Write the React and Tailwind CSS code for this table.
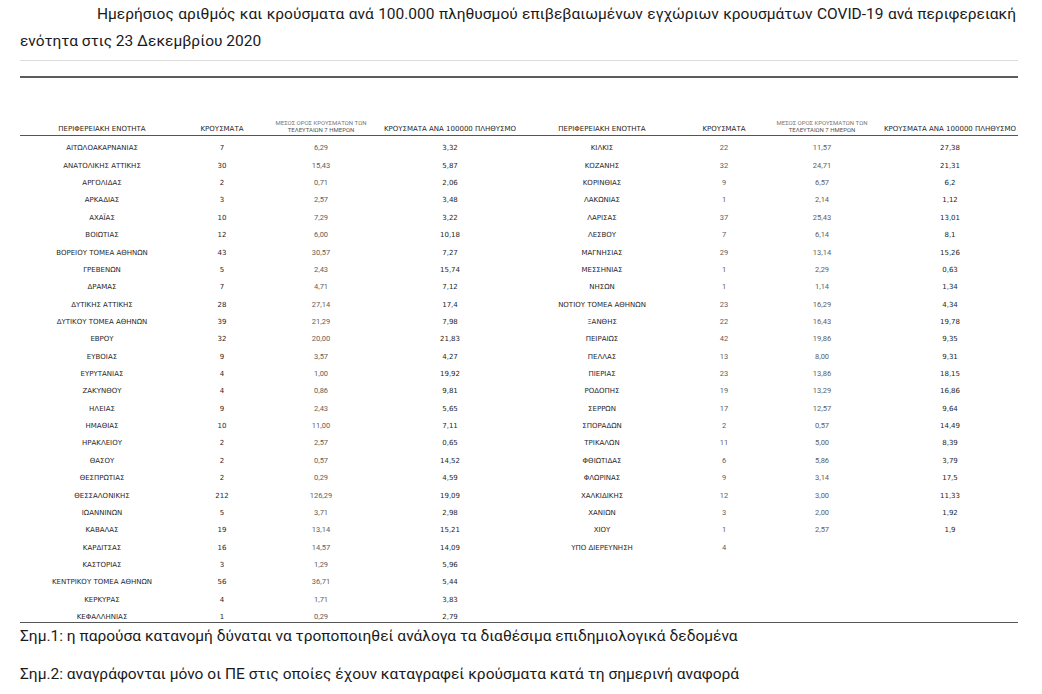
import React from "react";

const left = [
  ["ΑΙΤΩΛΟΑΚΑΡΝΑΝΙΑΣ", "7", "6,29", "3,32"],
  ["ΑΝΑΤΟΛΙΚΗΣ ΑΤΤΙΚΗΣ", "30", "15,43", "5,87"],
  ["ΑΡΓΟΛΙΔΑΣ", "2", "0,71", "2,06"],
  ["ΑΡΚΑΔΙΑΣ", "3", "2,57", "3,48"],
  ["ΑΧΑΪΑΣ", "10", "7,29", "3,22"],
  ["ΒΟΙΩΤΙΑΣ", "12", "6,00", "10,18"],
  ["ΒΟΡΕΙΟΥ ΤΟΜΕΑ ΑΘΗΝΩΝ", "43", "30,57", "7,27"],
  ["ΓΡΕΒΕΝΩΝ", "5", "2,43", "15,74"],
  ["ΔΡΑΜΑΣ", "7", "4,71", "7,12"],
  ["ΔΥΤΙΚΗΣ ΑΤΤΙΚΗΣ", "28", "27,14", "17,4"],
  ["ΔΥΤΙΚΟΥ ΤΟΜΕΑ ΑΘΗΝΩΝ", "39", "21,29", "7,98"],
  ["ΕΒΡΟΥ", "32", "20,00", "21,83"],
  ["ΕΥΒΟΙΑΣ", "9", "3,57", "4,27"],
  ["ΕΥΡΥΤΑΝΙΑΣ", "4", "1,00", "19,92"],
  ["ΖΑΚΥΝΘΟΥ", "4", "0,86", "9,81"],
  ["ΗΛΕΙΑΣ", "9", "2,43", "5,65"],
  ["ΗΜΑΘΙΑΣ", "10", "11,00", "7,11"],
  ["ΗΡΑΚΛΕΙΟΥ", "2", "2,57", "0,65"],
  ["ΘΑΣΟΥ", "2", "0,57", "14,52"],
  ["ΘΕΣΠΡΩΤΙΑΣ", "2", "0,29", "4,59"],
  ["ΘΕΣΣΑΛΟΝΙΚΗΣ", "212", "126,29", "19,09"],
  ["ΙΩΑΝΝΙΝΩΝ", "5", "3,71", "2,98"],
  ["ΚΑΒΑΛΑΣ", "19", "13,14", "15,21"],
  ["ΚΑΡΔΙΤΣΑΣ", "16", "14,57", "14,09"],
  ["ΚΑΣΤΟΡΙΑΣ", "3", "1,29", "5,96"],
  ["ΚΕΝΤΡΙΚΟΥ ΤΟΜΕΑ ΑΘΗΝΩΝ", "56", "36,71", "5,44"],
  ["ΚΕΡΚΥΡΑΣ", "4", "1,71", "3,83"],
  ["ΚΕΦΑΛΛΗΝΙΑΣ", "1", "0,29", "2,79"],
];

const right = [
  ["ΚΙΛΚΙΣ", "22", "11,57", "27,38"],
  ["ΚΟΖΑΝΗΣ", "32", "24,71", "21,31"],
  ["ΚΟΡΙΝΘΙΑΣ", "9", "6,57", "6,2"],
  ["ΛΑΚΩΝΙΑΣ", "1", "2,14", "1,12"],
  ["ΛΑΡΙΣΑΣ", "37", "25,43", "13,01"],
  ["ΛΕΣΒΟΥ", "7", "6,14", "8,1"],
  ["ΜΑΓΝΗΣΙΑΣ", "29", "13,14", "15,26"],
  ["ΜΕΣΣΗΝΙΑΣ", "1", "2,29", "0,63"],
  ["ΝΗΣΩΝ", "1", "1,14", "1,34"],
  ["ΝΟΤΙΟΥ ΤΟΜΕΑ ΑΘΗΝΩΝ", "23", "16,29", "4,34"],
  ["ΞΑΝΘΗΣ", "22", "16,43", "19,78"],
  ["ΠΕΙΡΑΙΩΣ", "42", "19,86", "9,35"],
  ["ΠΕΛΛΑΣ", "13", "8,00", "9,31"],
  ["ΠΙΕΡΙΑΣ", "23", "13,86", "18,15"],
  ["ΡΟΔΟΠΗΣ", "19", "13,29", "16,86"],
  ["ΣΕΡΡΩΝ", "17", "12,57", "9,64"],
  ["ΣΠΟΡΑΔΩΝ", "2", "0,57", "14,49"],
  ["ΤΡΙΚΑΛΩΝ", "11", "5,00", "8,39"],
  ["ΦΘΙΩΤΙΔΑΣ", "6", "5,86", "3,79"],
  ["ΦΛΩΡΙΝΑΣ", "9", "3,14", "17,5"],
  ["ΧΑΛΚΙΔΙΚΗΣ", "12", "3,00", "11,33"],
  ["ΧΑΝΙΩΝ", "3", "2,00", "1,92"],
  ["ΧΙΟΥ", "1", "2,57", "1,9"],
  ["ΥΠΟ ΔΙΕΡΕΥΝΗΣΗ", "4", "", ""],
];

const verd = "font-['DejaVu_Sans',Verdana,sans-serif] text-[7px] leading-[8px] text-[#262626]";
const cali = "font-['Roboto','Noto_Sans',sans-serif] text-[7.5px] leading-[8px] text-[#5e5e5e]";

function HeaderCells() {
  return (
    <>
      <div className={`${verd} text-center whitespace-nowrap`}>ΠΕΡΙΦΕΡΕΙΑΚΗ ΕΝΟΤΗΤΑ</div>
      <div className={`${verd} text-center whitespace-nowrap`}>ΚΡΟΥΣΜΑΤΑ</div>
      <div className="font-['Roboto','Noto_Sans',sans-serif] text-[6px] leading-[7px] text-[#777] text-center whitespace-nowrap">
        <div>ΜΕΣΟΣ ΟΡΟΣ ΚΡΟΥΣΜΑΤΩΝ ΤΩΝ</div>
        <div className="text-[#555]">ΤΕΛΕΥΤΑΙΩΝ 7 ΗΜΕΡΩΝ</div>
      </div>
      <div className={`${verd} text-center whitespace-nowrap`}>ΚΡΟΥΣΜΑΤΑ ΑΝΑ 100000 ΠΛΗΘΥΣΜΟ</div>
    </>
  );
}

function Rows({ data, cols, rightSide }) {
  return (
    <div className={`grid ${cols} auto-rows-[17.37px] content-start`}>
      {data.map((r, i) => (
        <React.Fragment key={i}>
          <div className={`${verd} flex items-end justify-center pb-[1px] whitespace-nowrap`}>{r[0]}</div>
          <div className={`${rightSide ? cali : verd} flex items-end justify-center pb-[1px]`}>{r[1]}</div>
          <div className={`${cali} flex items-end justify-center pb-[1px]`}>{r[2]}</div>
          <div className={`${verd} flex items-end justify-center pb-[1px]`}>{r[3]}</div>
        </React.Fragment>
      ))}
    </div>
  );
}

export default function App() {
  const big = "font-['Roboto','Noto_Sans',sans-serif] text-[15.5px] text-[#1a1a1a]";
  return (
    <div className="w-[1042px] h-[694px] bg-white overflow-hidden">
      <div className="pl-[20px] w-[1018px] pt-[1px]">
        <div className={`${big} leading-[27px] pl-[77px] pr-[2px] text-justify [text-align-last:justify]`}>
          Ημερήσιος αριθμός και κρούσματα ανά 100.000 πληθυσμού επιβεβαιωμένων εγχώριων κρουσμάτων COVID-19 ανά περιφερειακή
        </div>
        <div className={`${big} leading-[27px]`}>ενότητα στις 23 Δεκεμβρίου 2020</div>

        <div className="mt-[5px] h-px bg-[#dcdcdc]" />
        <div className="mt-[15px] h-[2px] bg-[#5c5c5c]" />

        <div className="h-[58px] grid grid-cols-[164px_76px_122px_136px_168px_76px_120px_136px] items-end pb-[2px] border-b-[1.5px] border-[#555]">
          <HeaderCells />
          <HeaderCells />
        </div>

        <div className="flex border-b-[1.5px] border-[#555]">
          <Rows data={left} cols="grid-cols-[164px_76px_122px_136px]" />
          <Rows data={right} cols="grid-cols-[168px_76px_120px_136px]" rightSide />
        </div>

        <div className={`${big} leading-[20px] mt-[3px]`}>
          Σημ.1: η παρούσα κατανομή δύναται να τροποποιηθεί ανάλογα τα διαθέσιμα επιδημιολογικά δεδομένα
        </div>
        <div className={`${big} leading-[20px] mt-[18px]`}>
          Σημ.2: αναγράφονται μόνο οι ΠΕ στις οποίες έχουν καταγραφεί κρούσματα κατά τη σημερινή αναφορά
        </div>
      </div>
    </div>
  );
}
